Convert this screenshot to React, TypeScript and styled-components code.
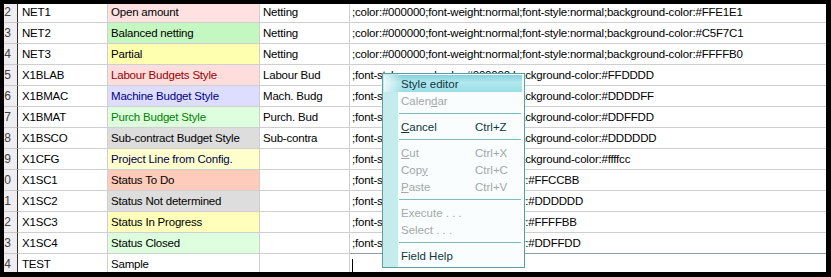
import styled, { createGlobalStyle } from "styled-components";

const GlobalStyle = createGlobalStyle`
  html, body {
    margin: 0;
    padding: 0;
    background: #000;
  }
  body {
    font-family: "Liberation Sans", Arial, sans-serif;
    font-size: 11px;
  }
`;

type StyleRow = {
  no: number;
  code: string;
  label: string;
  bg?: string;
  fg?: string;
  short?: string;
  css: string;
};

const full = ";color:#000000;font-weight:normal;font-style:normal;background-color:";
const part = ";font-style:normal;color:#000000;background-color:";
const short = ";font-style:normal;background-color:";

const rows: StyleRow[] = [
  { no: 12, code: "NET1", label: "Open amount", bg: "#FFE1E1", short: "Netting", css: full + "#FFE1E1" },
  { no: 13, code: "NET2", label: "Balanced netting", bg: "#C5F7C1", short: "Netting", css: full + "#C5F7C1" },
  { no: 14, code: "NET3", label: "Partial", bg: "#FFFFB0", short: "Netting", css: full + "#FFFFB0" },
  { no: 15, code: "X1BLAB", label: "Labour Budgets Style", bg: "#FFDDDD", fg: "#990000", short: "Labour Bud", css: part + "#FFDDDD" },
  { no: 16, code: "X1BMAC", label: "Machine Budget Style", bg: "#DDDDFF", fg: "#000080", short: "Mach. Budg", css: part + "#DDDDFF" },
  { no: 17, code: "X1BMAT", label: "Purch Budget Style", bg: "#DDFFDD", fg: "#008000", short: "Purch. Bud", css: part + "#DDFFDD" },
  { no: 18, code: "X1BSCO", label: "Sub-contract Budget Style", bg: "#DDDDDD", short: "Sub-contra", css: part + "#DDDDDD" },
  { no: 19, code: "X1CFG", label: "Project Line from Config.", bg: "#FFFFCC", fg: "#000050", css: part + "#ffffcc" },
  { no: 20, code: "X1SC1", label: "Status To Do", bg: "#FFCCBB", css: short + "#FFCCBB" },
  { no: 21, code: "X1SC2", label: "Status Not determined", bg: "#DDDDDD", css: short + "#DDDDDD" },
  { no: 22, code: "X1SC3", label: "Status In Progress", bg: "#FFFFBB", css: short + "#FFFFBB" },
  { no: 23, code: "X1SC4", label: "Status Closed", bg: "#DDFFDD", css: short + "#DDFFDD" },
  { no: 24, code: "TEST", label: "Sample", css: "" },
];

type MenuEntry =
  | { sep: true }
  | { sep?: false; label: string; key?: number; shortcut?: string; disabled?: boolean; active?: boolean };

const menu: MenuEntry[] = [
  { label: "Style editor", active: true },
  { label: "Calendar", key: 5, disabled: true },
  { sep: true },
  { label: "Cancel", key: 0, shortcut: "Ctrl+Z" },
  { sep: true },
  { label: "Cut", key: 0, shortcut: "Ctrl+X", disabled: true },
  { label: "Copy", key: 3, shortcut: "Ctrl+C", disabled: true },
  { label: "Paste", key: 0, shortcut: "Ctrl+V", disabled: true },
  { sep: true },
  { label: "Execute . . .", disabled: true },
  { label: "Select . . .", disabled: true },
  { sep: true },
  { label: "Field Help" },
];

export default function App() {
  return (
    <>
      <GlobalStyle />
      <Frame>
        <Viewport>
          <Sheet>
            {rows.map((r) => (
              <Row key={r.code}>
                <RowHead>{r.no}</RowHead>
                <Cell $pad={4}>{r.code}</Cell>
                <Cell $pad={3} $bg={r.bg} $fg={r.fg}>
                  {r.label}
                </Cell>
                <Cell $pad={3}>{r.short}</Cell>
                {r.css ? (
                  <Cell $pad={2} $last>
                    {r.css}
                  </Cell>
                ) : (
                  <EditCell>
                    <Caret />
                  </EditCell>
                )}
              </Row>
            ))}
          </Sheet>
          <Menu>
            {menu.map((m, i) =>
              m.sep ? (
                <Separator key={i} />
              ) : (
                <MenuItem key={i} $disabled={m.disabled} $active={m.active}>
                  <span>
                    {m.key === undefined ? (
                      m.label
                    ) : (
                      <>
                        {m.label.slice(0, m.key)}
                        <u>{m.label[m.key]}</u>
                        {m.label.slice(m.key + 1)}
                      </>
                    )}
                  </span>
                  <span>{m.shortcut}</span>
                </MenuItem>
              )
            )}
          </Menu>
        </Viewport>
      </Frame>
    </>
  );
}

const Frame = styled.div`
  width: 831px;
  height: 277px;
  box-sizing: border-box;
  padding: 4px 5px 5px 4px;
  background: #000;
`;

const Viewport = styled.div`
  position: relative;
  width: 100%;
  height: 100%;
  background: #fff;
  overflow: hidden;
`;

const Sheet = styled.div`
  margin-top: -2px;
  display: flex;
  flex-direction: column;
`;

const Row = styled.div`
  display: grid;
  grid-template-columns: 14px 90px 152px 90px 1fr;
  height: 21px;
`;

const RowHead = styled.div`
  display: flex;
  justify-content: flex-end;
  align-items: center;
  padding-right: 6px;
  overflow: hidden;
  white-space: nowrap;
  background: #efedef;
  color: #404040;
  border-right: 1px solid #303030;
  border-bottom: 1px solid #c8c8c8;
  font-size: 12px;
`;

const Cell = styled.div<{ $pad: number; $bg?: string; $fg?: string; $last?: boolean }>`
  display: flex;
  align-items: center;
  padding-left: ${(p) => p.$pad}px;
  overflow: hidden;
  white-space: nowrap;
  background: ${(p) => p.$bg ?? "#fff"};
  color: ${(p) => p.$fg ?? "#000"};
  border-right: ${(p) => (p.$last ? "none" : "1px solid #cfcfcf")};
  border-bottom: 1px solid #cfcfcf;
  letter-spacing: -0.2px;
  font-size: 11.5px;
`;

const EditCell = styled.div`
  display: flex;
  align-items: center;
  padding-left: 2px;
  background: #fff;
  box-shadow: inset 0 -1px 0 #fff, 0 -1px 0 #8d9bab;
`;

const Caret = styled.span`
  display: block;
  width: 1px;
  height: 13px;
  margin-top: 1px;
  background: #000;
`;

const Menu = styled.div`
  position: absolute;
  left: 378px;
  top: 69px;
  width: 141px;
  padding: 1px 0 3px;
  border: 1px solid #5c9fa2;
  background: linear-gradient(to right, #c4ecec 0 15px, #f9fdfd 15px);
  display: flex;
  flex-direction: column;
`;

const MenuItem = styled.div<{ $disabled?: boolean; $active?: boolean }>`
  display: grid;
  grid-template-columns: 74px auto;
  align-items: center;
  height: 17px;
  margin: 0 2px 0 1px;
  padding-left: 17px;
  font-size: 11.5px;
  color: ${(p) => (p.$disabled ? "#a4a8a8" : "#0f3640")};
  background: ${(p) =>
    p.$active
      ? "linear-gradient(to right, rgba(255,255,255,0.75), rgba(255,255,255,0) 18px), linear-gradient(to bottom, #86d2dd, #b2e8ee 45%, #9adde6)"
      : "transparent"};
`;

const Separator = styled.div`
  height: 9px;
  margin: 0 3px 0 16px;
  background: linear-gradient(#7dbcbd, #7dbcbd) center / 100% 1px no-repeat;
`;
